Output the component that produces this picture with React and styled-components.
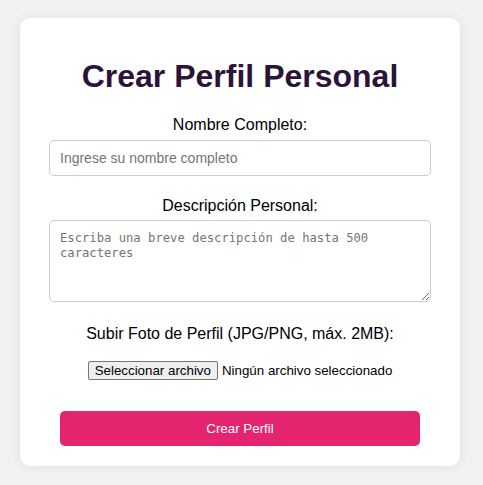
import React from "react";
import styled, { createGlobalStyle } from "styled-components";

const Global = createGlobalStyle`
  html, body { margin: 0; padding: 0; }
  body {
    background: #f2f2f2;
    font-family: "Liberation Sans", Arial, sans-serif;
  }
`;

const Page = styled.div`
  padding: 18px 23px 20px 20px;
`;

const Card = styled.form`
  width: 440px;
  box-sizing: border-box;
  background: #fff;
  border-radius: 10px;
  box-shadow: 0 0 12px rgba(0, 0, 0, 0.08);
  padding: 40px 29px 20px;
  display: flex;
  flex-direction: column;
  align-items: stretch;
`;

const Title = styled.h1`
  margin: 0 0 21px;
  font-size: 32px;
  line-height: 37px;
  font-weight: 700;
  color: #2a1438;
  text-align: center;
`;

const Label = styled.label`
  display: block;
  text-align: center;
  font-size: 16px;
  line-height: 18px;
  color: #000;
  margin: ${(p) => p.$top || 0}px 0 ${(p) => p.$bottom || 6}px;
`;

const TextInput = styled.input`
  box-sizing: border-box;
  width: 100%;
  height: 36px;
  border: 1px solid #ccc;
  border-radius: 5px;
  padding: 0 10px;
  font-family: "Liberation Sans", Arial, sans-serif;
  font-size: 14px;
  outline: none;
  &::placeholder { color: #757575; }
`;

const TextArea = styled.textarea`
  box-sizing: border-box;
  width: 100%;
  height: 82px;
  border: 1px solid #ccc;
  border-radius: 5px;
  padding: 10px;
  font-family: "DejaVu Sans Mono", "Liberation Mono", monospace;
  font-size: 12.2px;
  line-height: 15px;
  resize: vertical;
  outline: none;
  display: block;
  &::placeholder { color: #757575; }
`;

const FileRow = styled.div`
  display: flex;
  justify-content: center;
  align-items: center;
  gap: 4px;
  font-size: 13.33px;
  color: #000;
  margin-top: 12px;
  height: 19px;
`;

const HiddenFile = styled.input`
  display: none;
`;

const FileButton = styled.label`
  box-sizing: border-box;
  height: 19px;
  display: inline-flex;
  align-items: center;
  padding: 0 6px;
  background: #efefef;
  border: 1px solid #767676;
  border-radius: 2px;
  font-size: 13.33px;
  color: #000;
  cursor: default;
`;

const Submit = styled.button`
  margin: 31px 11px 0;
  height: 35px;
  border: none;
  border-radius: 5px;
  background: #e5246f;
  color: #fff;
  font-family: "Liberation Sans", Arial, sans-serif;
  font-size: 13.33px;
  cursor: pointer;
`;

export default function App() {
  return (
    <>
      <Global />
      <Page>
        <Card onSubmit={(e) => e.preventDefault()}>
          <Title>Crear Perfil Personal</Title>
          <Label htmlFor="nombre" $bottom={6}>Nombre Completo:</Label>
          <TextInput id="nombre" placeholder="Ingrese su nombre completo" />
          <Label htmlFor="desc" $top={21} $bottom={5}>Descripción Personal:</Label>
          <TextArea id="desc" placeholder="Escriba una breve descripción de hasta 500 caracteres" />
          <Label htmlFor="foto" $top={23} $bottom={0}>Subir Foto de Perfil (JPG/PNG, máx. 2MB):</Label>
          <FileRow>
            <FileButton htmlFor="foto">Seleccionar archivo</FileButton>
            <span>Ningún archivo seleccionado</span>
            <HiddenFile id="foto" type="file" accept="image/png, image/jpeg" />
          </FileRow>
          <Submit type="submit">Crear Perfil</Submit>
        </Card>
      </Page>
    </>
  );
}
